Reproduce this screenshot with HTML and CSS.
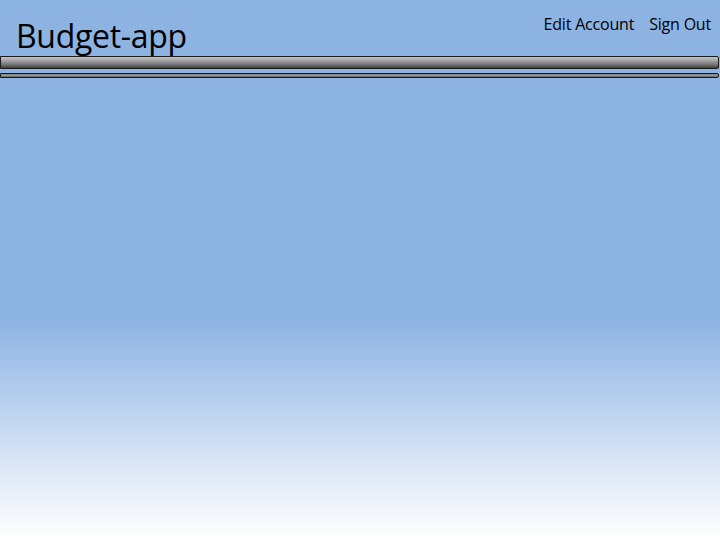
FILE: index.html
```html
<!DOCTYPE html>
<html>
<head>
<meta charset="utf-8">
<title>Budget-app</title>
<link rel="stylesheet" href="styles.css">
</head>
<body>
<header class="header">
  <h1 class="title">Budget-app</h1>
  <nav class="nav">
    <a class="nav-link" href="#">Edit Account</a>
    <a class="nav-link" href="#">Sign Out</a>
  </nav>
</header>
<div class="rule rule-thick"></div>
<div class="rule rule-thin"></div>
</body>
</html>
```

FILE: styles.css
```css
html, body {
  margin: 0;
  padding: 0;
  height: 100%;
}
body {
  font-family: "Open Sans", "Liberation Sans", sans-serif;
  background: linear-gradient(to bottom, #8db3e2 0%, #8db3e2 59%, #b4cdee 73%, #dbe6f6 86%, #ffffff 100%);
  min-height: 540px;
  color: #000;
}
.header {
  display: flex;
  justify-content: space-between;
  align-items: flex-start;
  height: 56px;
}
.title {
  margin: 0;
  padding: 16px 0 0 16px;
  font-weight: 400;
  font-size: 32px;
  line-height: 40px;
  letter-spacing: -0.3px;
}
.nav {
  display: flex;
  gap: 15px;
  padding: 12px 9px 0 0;
}
.nav-link {
  color: #000;
  text-decoration: none;
  font-size: 16px;
  line-height: 24px;
  letter-spacing: -0.2px;
}
.rule {
  box-sizing: border-box;
  border: 1px solid #1a1a1a;
  border-radius: 0 2px 2px 0;
  margin-right: 1px;
}
.rule-thick {
  height: 13px;
  background: linear-gradient(to bottom, #c4c4c4 0%, #a6a6a6 30%, #7a7a7a 65%, #404040 100%);
}
.rule-thin {
  height: 5px;
  margin-top: 4px;
  background: linear-gradient(to bottom, #7d7d7d 0%, #9a9a9a 50%, #5a5a5a 100%);
}
```
